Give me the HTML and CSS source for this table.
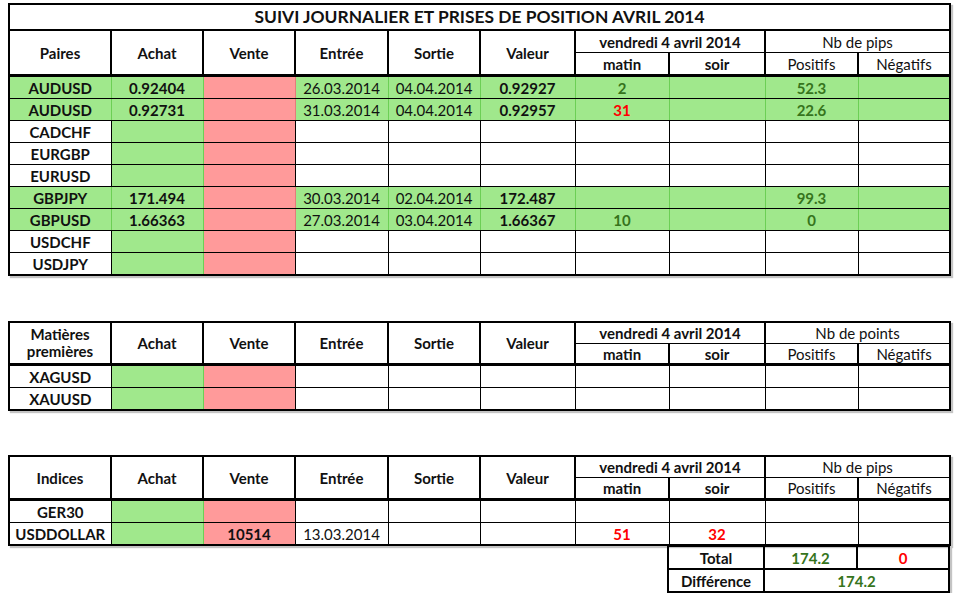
FILE: index.html
```html
<!DOCTYPE html>
<html lang="fr">
<head>
<meta charset="utf-8">
<title>Suivi journalier</title>
<link rel="stylesheet" href="styles.css">
</head>
<body>
<table class="grid t1">
  <colgroup>
    <col class="c1"><col class="c2"><col class="c3"><col class="c4"><col class="c5"><col class="c6"><col class="c7"><col class="c8"><col class="c9"><col class="c10">
  </colgroup>
  <tr class="title"><td colspan="10">SUIVI JOURNALIER ET PRISES DE POSITION AVRIL 2014</td></tr>
  <tr class="h1">
    <th rowspan="2">Paires</th><th rowspan="2">Achat</th><th rowspan="2">Vente</th><th rowspan="2">Entrée</th><th rowspan="2">Sortie</th><th rowspan="2">Valeur</th>
    <th colspan="2">vendredi 4 avril 2014</th><th colspan="2" class="n">Nb de pips</th>
  </tr>
  <tr class="h2"><th>matin</th><th>soir</th><th class="n">Positifs</th><th class="n">Négatifs</th></tr>
  <tr class="g first"><td>AUDUSD</td><td>0.92404</td><td class="r"></td><td class="n">26.03.2014</td><td class="n">04.04.2014</td><td>0.92927</td><td class="tg">2</td><td></td><td class="tg">52.3</td><td></td></tr>
  <tr class="g"><td>AUDUSD</td><td>0.92731</td><td class="r"></td><td class="n">31.03.2014</td><td class="n">04.04.2014</td><td>0.92957</td><td class="tr">31</td><td></td><td class="tg">22.6</td><td></td></tr>
  <tr><td>CADCHF</td><td class="gc"></td><td class="r"></td><td></td><td></td><td></td><td></td><td></td><td></td><td></td></tr>
  <tr><td>EURGBP</td><td class="gc"></td><td class="r"></td><td></td><td></td><td></td><td></td><td></td><td></td><td></td></tr>
  <tr><td>EURUSD</td><td class="gc"></td><td class="r"></td><td></td><td></td><td></td><td></td><td></td><td></td><td></td></tr>
  <tr class="g"><td>GBPJPY</td><td>171.494</td><td class="r"></td><td class="n">30.03.2014</td><td class="n">02.04.2014</td><td>172.487</td><td></td><td></td><td class="tg">99.3</td><td></td></tr>
  <tr class="g"><td>GBPUSD</td><td>1.66363</td><td class="r"></td><td class="n">27.03.2014</td><td class="n">03.04.2014</td><td>1.66367</td><td class="tg">10</td><td></td><td class="tg">0</td><td></td></tr>
  <tr><td>USDCHF</td><td class="gc"></td><td class="r"></td><td></td><td></td><td></td><td></td><td></td><td></td><td></td></tr>
  <tr><td>USDJPY</td><td class="gc"></td><td class="r"></td><td></td><td></td><td></td><td></td><td></td><td></td><td></td></tr>
</table>

<table class="grid t2">
  <colgroup>
    <col class="c1"><col class="c2"><col class="c3"><col class="c4"><col class="c5"><col class="c6"><col class="c7"><col class="c8"><col class="c9"><col class="c10">
  </colgroup>
  <tr class="h1">
    <th rowspan="2" class="wrap">Matières<br>premières</th><th rowspan="2">Achat</th><th rowspan="2">Vente</th><th rowspan="2">Entrée</th><th rowspan="2">Sortie</th><th rowspan="2">Valeur</th>
    <th colspan="2">vendredi 4 avril 2014</th><th colspan="2" class="n">Nb de points</th>
  </tr>
  <tr class="h2"><th>matin</th><th>soir</th><th class="n">Positifs</th><th class="n">Négatifs</th></tr>
  <tr class="first"><td>XAGUSD</td><td class="gc"></td><td class="r"></td><td></td><td></td><td></td><td></td><td></td><td></td><td></td></tr>
  <tr><td>XAUUSD</td><td class="gc"></td><td class="r"></td><td></td><td></td><td></td><td></td><td></td><td></td><td></td></tr>
</table>

<table class="grid t3">
  <colgroup>
    <col class="c1"><col class="c2"><col class="c3"><col class="c4"><col class="c5"><col class="c6"><col class="c7"><col class="c8"><col class="c9"><col class="c10">
  </colgroup>
  <tr class="h1">
    <th rowspan="2">Indices</th><th rowspan="2">Achat</th><th rowspan="2">Vente</th><th rowspan="2">Entrée</th><th rowspan="2">Sortie</th><th rowspan="2">Valeur</th>
    <th colspan="2">vendredi 4 avril 2014</th><th colspan="2" class="n">Nb de pips</th>
  </tr>
  <tr class="h2"><th>matin</th><th>soir</th><th class="n">Positifs</th><th class="n">Négatifs</th></tr>
  <tr class="first"><td>GER30</td><td class="gc"></td><td class="r"></td><td></td><td></td><td></td><td></td><td></td><td></td><td></td></tr>
  <tr><td>USDDOLLAR</td><td class="gc"></td><td class="r">10514</td><td class="n">13.03.2014</td><td></td><td></td><td class="tr">51</td><td class="tr">32</td><td></td><td></td></tr>
</table>

<table class="grid summary">
  <colgroup><col class="c8"><col class="c9"><col class="c10"></colgroup>
  <tr><td>Total</td><td class="tg">174.2</td><td class="tr">0</td></tr>
  <tr><td>Différence</td><td colspan="2" class="tg">174.2</td></tr>
</table>
</body>
</html>
```

FILE: styles.css
```css
html, body {
  background: #ffffff;
}
body {
  margin: 0;
  padding: 3px 0 0 8px;
  font-family: Lato, "Liberation Sans", sans-serif;
  color: #111;
}
.grid {
  border-collapse: collapse;
  table-layout: fixed;
  width: 941px;
  border: 2px solid #000;
  box-shadow: 2px 2px 1px #c4c4c4;
}
.t2 { margin-top: 45px; }
.t3 { margin-top: 44px; }
.summary {
  width: 281px;
  margin: -1px 0 0 659px;
}
.c1 { width: 102px; }
.c2 { width: 92px; }
.c3 { width: 92px; }
.c4 { width: 93px; }
.c5 { width: 92px; }
.c6 { width: 95px; }
.c7 { width: 94px; }
.c8 { width: 96px; }
.c9 { width: 93px; }
.c10 { width: 92px; }

td, th {
  border: 1px solid #000;
  padding: 0;
  height: 21px;
  text-align: center;
  vertical-align: middle;
  font-size: 15px;
  font-weight: bold;
  line-height: 18px;
  white-space: nowrap;
  overflow: hidden;
}
.title td {
  height: 24px;
  font-size: 17.4px;
  border-bottom: 2px solid #000;
}
.h1 th {
  height: 21px;
  border-left: 2px solid #000;
  border-right: 2px solid #000;
}
.h2 th {
  height: 21px;
  border-left: 2px solid #000;
  border-right: 2px solid #000;
  border-bottom: 3px solid #000;
}
.t2 .h1 th, .t3 .h1 th, .t3 .h2 th {
  height: 20px;
}
.t2 .h2 th {
  height: 19px;
}
.h1 th[rowspan] {
  border-bottom: 3px solid #000;
}
.wrap {
  white-space: normal;
  line-height: 17px;
}
.n { font-weight: normal; }
.g td { background: #a0e88c; border-left-color: #6ccf55; border-right-color: #6ccf55; }
.g td:first-child { border-left-color: #000; }
.g td:last-child { border-right-color: #000; }
.gc { background: #a0e88c; border-left-color: #6ccf55; border-right-color: #6ccf55; }
.r { background: #ff9a9a; }
.g td.r { background: #ff9a9a; border-left-color: #6ccf55; border-right-color: #e57b7b; }
.tg { color: #36741c; }
.tr { color: #ff0000; }
.summary td { height: 21px; border-width: 2px; }
```
